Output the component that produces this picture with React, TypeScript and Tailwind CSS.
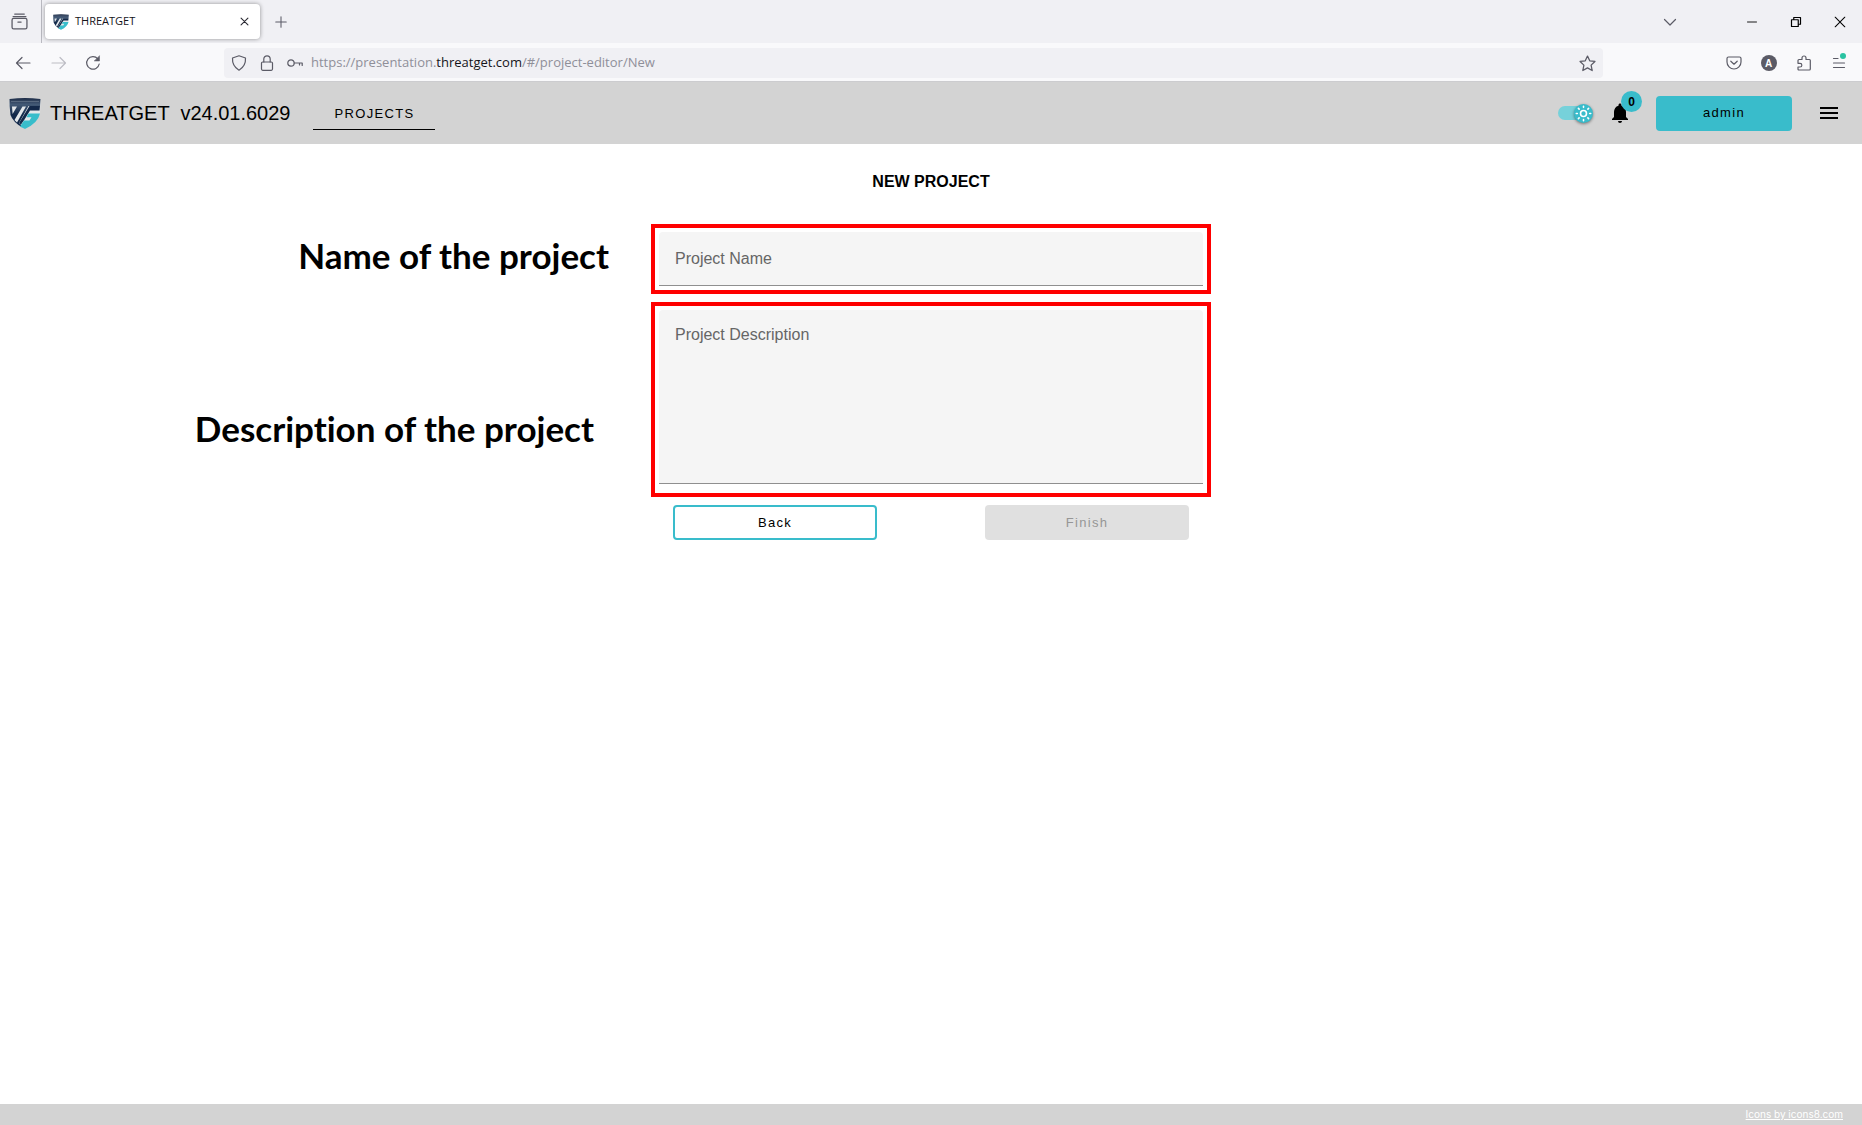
import { useState } from "react";
import type { ReactNode } from "react";
import { MdMenu, MdNotifications } from "react-icons/md";

function Logo({ className }: { className?: string }) {
  return (
    <svg viewBox="0 0 32 31" className={className} aria-hidden="true">
      <defs>
        <linearGradient id="navy" x1="0" y1="0" x2="0" y2="1">
          <stop offset="0" stopColor="#1c2b45" />
          <stop offset="0.22" stopColor="#435a76" />
          <stop offset="0.55" stopColor="#13294a" />
        </linearGradient>
      </defs>
      <path d="M0.5 1 Q16 -1 31.5 1 L31 15 Q28 25 16 31 Q4 25 1 15Z" fill="#e3e7ea" />
      <path
        d="M0.5 1 Q16 -1 31.5 1 L31 8 H19.5 L10 25 L14 28.8 L13 29.3 Q4 24 1.5 17 L0.6 8Z M3 8.5 L3.6 16 L8 8.5Z M13.5 8.5 L5.5 22 L8 24.5 L17 8.5Z"
        fill="url(#navy)"
        fillRule="evenodd"
      />
      <path d="M20.5 8 H31 L30.5 12.5 H21 L15.5 21.5 L12 26.5 L10 25Z" fill="#13294a" />
      <path d="M2 3.4 H30" stroke="#8896a6" strokeWidth="0.5" />
      <path
        d="M19.5 15.5 H31 Q29 25 16 31 L11 28.5 L15 22.5 H20.5 L22.5 19.2 H17.5Z"
        fill="#38bdcb"
      />
    </svg>
  );
}

function Glyph({ size = 16, children }: { size?: number; children: ReactNode }) {
  return (
    <svg
      width={size}
      height={size}
      viewBox="0 0 16 16"
      fill="none"
      stroke="currentColor"
      strokeWidth="1.2"
      strokeLinecap="round"
      strokeLinejoin="round"
      aria-hidden="true"
    >
      {children}
    </svg>
  );
}

function IconButton({ label, className = "w-9", children }: { label: string; className?: string; children: ReactNode }) {
  return (
    <button type="button" aria-label={label} className={`flex h-8 shrink-0 items-center justify-center ${className}`}>
      {children}
    </button>
  );
}

function TabStrip() {
  return (
    <div className="flex h-[43px] items-center bg-[#f0f0f4] text-[#5b5b66]">
      <div className="flex h-full w-[42px] items-center justify-center border-r border-[#b9b9c0] pr-0.5">
        <IconButton label="Recent browsing" className="w-8">
          <Glyph size={17}>
            <path d="M3.5 1 H12.5 M2 3.5 H14" />
            <rect x="1" y="5" width="14" height="10" rx="1.5" />
            <path d="M6.5 8.5 H9.5" />
          </Glyph>
        </IconButton>
      </div>
      <div className="ml-[3px] flex h-[35px] w-[215px] items-center rounded bg-white pl-2 shadow-[0_0_4px_rgba(0,0,0,0.4)]">
        <Logo className="h-4 w-4" />
        <span className="ml-1.5 flex-1 font-['Open_Sans',sans-serif] text-[11px] text-[#15141a]">THREATGET</span>
        <IconButton label="Close tab" className="w-8">
          <Glyph size={11}>
            <path d="M3 3 L13 13 M13 3 L3 13" stroke="#2b2a33" strokeWidth="1.6" />
          </Glyph>
        </IconButton>
      </div>
      <IconButton label="New tab" className="ml-[5px] w-8">
        <Glyph size={14}>
          <path d="M8 2 V14 M2 8 H14" />
        </Glyph>
      </IconButton>
      <div className="flex-1" />
      <IconButton label="List all tabs">
        <Glyph>
          <path d="M2.5 5.5 L8 11 L13.5 5.5" />
        </Glyph>
      </IconButton>
      <IconButton label="Minimize" className="ml-[42px] w-11 text-black">
        <Glyph size={12}>
          <path d="M2 8 H14" />
        </Glyph>
      </IconButton>
      <IconButton label="Restore" className="w-11 text-black">
        <Glyph size={12}>
          <path d="M2 5 H11 V14 H2Z M5 5 V2 H14 V11 H11" strokeWidth="1.6" />
        </Glyph>
      </IconButton>
      <IconButton label="Close window" className="w-11 text-black">
        <Glyph size={14}>
          <path d="M2.5 2.5 L13.5 13.5 M13.5 2.5 L2.5 13.5" />
        </Glyph>
      </IconButton>
    </div>
  );
}

function AddressBar() {
  return (
    <div className="flex h-[39px] items-center border-b border-[#cccccf] bg-[#f9f9fb] pl-[5px] pt-0.5 text-[#5b5b66]">
      <IconButton label="Back">
        <Glyph>
          <path d="M15 8 H1.5 M7 2.5 L1.5 8 L7 13.5" />
        </Glyph>
      </IconButton>
      <IconButton label="Forward" className="w-9 text-[#bdbdc4]">
        <Glyph>
          <path d="M1 8 H14.5 M9 2.5 L14.5 8 L9 13.5" />
        </Glyph>
      </IconButton>
      <IconButton label="Reload" className="w-8">
        <Glyph>
          <path d="M14.2 9 A6.3 6.3 0 1 1 12.8 3.8" />
          <path d="M14.5 1 V6 H9.5Z" fill="currentColor" strokeWidth="0.5" />
        </Glyph>
      </IconButton>
      <div className="ml-[115px] flex h-[30px] flex-1 items-center rounded bg-[#f0f0f4] pl-px">
        <IconButton label="Tracking protection" className="w-7">
          <Glyph>
            <path d="M8 0.8 L14.5 3 Q15 11 8 15.2 Q1 11 1.5 3Z" />
          </Glyph>
        </IconButton>
        <IconButton label="Site information" className="w-7">
          <Glyph>
            <rect x="2.5" y="7" width="11" height="8.3" rx="1.2" />
            <path d="M4.8 7 V4 A3.2 3.2 0 0 1 11.2 4 V7" />
          </Glyph>
        </IconButton>
        <IconButton label="Saved login" className="w-7">
          <Glyph>
            <circle cx="4" cy="8" r="3.2" />
            <path d="M7.2 8 H15.2 V10.5 M12.5 8 V10" />
          </Glyph>
        </IconButton>
        <div className="ml-0.5 flex-1 font-['Open_Sans',sans-serif] text-[13px] text-[#8f8f99]">
          https://presentation.<span className="text-[#15141a]">threatget.com</span>/#/project-editor/New
        </div>
        <IconButton label="Bookmark this page" className="w-8">
          <Glyph size={17}>
            <path d="M8 1 L10.1 5.5 L15 6.1 L11.4 9.5 L12.4 14.6 L8 12.1 L3.6 14.6 L4.6 9.5 L1 6.1 L5.9 5.5Z" />
          </Glyph>
        </IconButton>
      </div>
      <div className="ml-[113px] mr-1.5 flex">
        <IconButton label="Save to Pocket" className="w-[35px]">
          <Glyph>
            <path d="M2.5 2 H13.5 Q15 2 15 3.5 V7 A7 7 0 0 1 1 7 V3.5 Q1 2 2.5 2Z M4.8 6.2 L8 9.2 L11.2 6.2" />
          </Glyph>
        </IconButton>
        <IconButton label="Account" className="w-[35px]">
          <span className="flex h-4 w-4 items-center justify-center rounded-full bg-[#5b5b66] text-[10px] font-bold text-white">
            A
          </span>
        </IconButton>
        <IconButton label="Extensions" className="w-[35px]">
          <Glyph>
            <path d="M2 8.3 V5.5 Q2 4.5 3 4.5 H6 V3 A2 2 0 0 1 10 3 V4.5 H13.5 Q14.3 4.5 14.3 5.5 V14 Q14.3 15 13.3 15 H3 Q2 15 2 14 V12 H4 A1.8 1.8 0 0 0 4 8.3Z" />
          </Glyph>
        </IconButton>
        <IconButton label="Application menu" className="relative w-[35px]">
          <Glyph>
            <path d="M2.5 3.5 H7 M2.5 8 H13.5 M2.5 12.5 H13.5" />
          </Glyph>
          <span className="absolute right-2.5 top-1.5 h-1.5 w-1.5 rounded-full bg-[#2ac3a2]" />
        </IconButton>
      </div>
    </div>
  );
}

function ThemeToggle() {
  const [light, setLight] = useState(true);

  return (
    <label className="flex h-5 w-9 cursor-pointer items-center">
      <input
        type="checkbox"
        aria-label="Light theme"
        checked={light}
        onChange={(e) => setLight(e.target.checked)}
        className="peer sr-only"
      />
      <span className="flex h-3.5 w-8 items-center rounded-full bg-[#76d1da] peer-checked:pl-4">
        <span className="flex h-[19px] w-[19px] shrink-0 items-center justify-center rounded-full bg-[#39bccb] text-white shadow-[0_1px_3px_rgba(0,0,0,0.45)]">
          <Glyph size={17}>
            <circle cx="8" cy="8" r="2.8" strokeWidth="1.5" />
            <path
              d="M8 1.2 V2.2 M8 13.8 V14.8 M1.2 8 H2.2 M13.8 8 H14.8 M3.2 3.2 L3.9 3.9 M12.1 12.1 L12.8 12.8 M3.2 12.8 L3.9 12.1 M12.1 3.9 L12.8 3.2"
              strokeWidth="1.5"
            />
          </Glyph>
        </span>
      </span>
    </label>
  );
}

function AppHeader() {
  return (
    <header className="flex h-[62px] items-center bg-[#d3d3d3] pl-[9px] pr-[21px] text-black">
      <Logo className="h-[31px] w-8" />
      <span className="ml-[9px] whitespace-pre text-[20px]">THREATGET  v24.01.6029</span>
      <nav className="ml-[23px]">
        <a
          href="#/projects"
          className="flex h-[34px] w-[122px] items-center justify-center border-b border-black pt-0.5 text-[13px] tracking-widest"
        >
          PROJECTS
        </a>
      </nav>
      <div className="ml-auto flex items-center">
        <ThemeToggle />
        <button type="button" aria-label="Notifications" className="relative ml-3.5">
          <MdNotifications size={24} />
          <span className="absolute -top-2.5 left-[13px] flex h-[21px] w-[21px] items-center justify-center rounded-full bg-[#39bccb] text-[12px] font-bold">
            0
          </span>
        </button>
        <button
          type="button"
          className="ml-6 h-[35px] w-[136px] rounded bg-[#39bccb] text-[13px] tracking-widest"
        >
          admin
        </button>
        <button type="button" aria-label="Menu" className="ml-[25px]">
          <MdMenu size={24} />
        </button>
      </div>
    </header>
  );
}

function Callout({ text, className, children }: { text: string; className: string; children: ReactNode }) {
  return (
    <div className="grid grid-cols-[1fr_560px_1fr]">
      <p
        className={`self-center text-right font-['Lato',sans-serif] text-[35px] font-bold leading-10 [font-variant-ligatures:none] ${className}`}
      >
        {text}
      </p>
      <div className="border-4 border-[#ff0000] px-1 pt-1">{children}</div>
    </div>
  );
}

export default function App() {
  const [name, setName] = useState("");
  const [description, setDescription] = useState("");
  const fieldClass =
    "block w-full rounded-t border-b border-[#8f8f8f] bg-[#f5f5f5] px-4 text-[16px] leading-6 text-black outline-none placeholder:text-[#666666]";

  return (
    <div className="flex min-h-screen flex-col bg-white font-['Liberation_Sans',Arial,sans-serif] text-black">
      <TabStrip />
      <AddressBar />
      <AppHeader />
      <main className="flex-1">
        <h1 className="mt-[26px] text-center text-[16px] font-bold leading-6">NEW PROJECT</h1>
        <form className="mt-[30px] flex flex-col gap-2" onSubmit={(e) => e.preventDefault()}>
          <Callout text="Name of the project" className="pb-2 pr-[42px]">
            <input
              type="text"
              aria-label="Project Name"
              placeholder="Project Name"
              value={name}
              onChange={(e) => setName(e.target.value)}
              className={`mb-1 h-[54px] ${fieldClass}`}
            />
          </Callout>
          <Callout text="Description of the project" className="pr-[57px] pt-14">
            <textarea
              aria-label="Project Description"
              placeholder="Project Description"
              value={description}
              onChange={(e) => setDescription(e.target.value)}
              className={`mb-[9px] h-[174px] resize-none pt-[13px] ${fieldClass}`}
            />
          </Callout>
          <div className="flex justify-center gap-[108px]">
            <button
              type="button"
              className="h-[35px] w-[204px] rounded border-2 border-[#39bccb] text-[13px] tracking-widest"
            >
              Back
            </button>
            <button
              type="submit"
              disabled={!name}
              className="h-[35px] w-[204px] rounded bg-[#39bccb] text-[13px] tracking-widest disabled:bg-[#e0e0e0] disabled:text-[#969696]"
            >
              Finish
            </button>
          </div>
        </form>
      </main>
      <footer className="flex h-[21px] items-center justify-end bg-[#d3d3d3] pr-[19px]">
        <a href="https://icons8.com" className="font-['Inter',sans-serif] text-[10px] text-white underline">
          Icons by icons8.com
        </a>
      </footer>
    </div>
  );
}
